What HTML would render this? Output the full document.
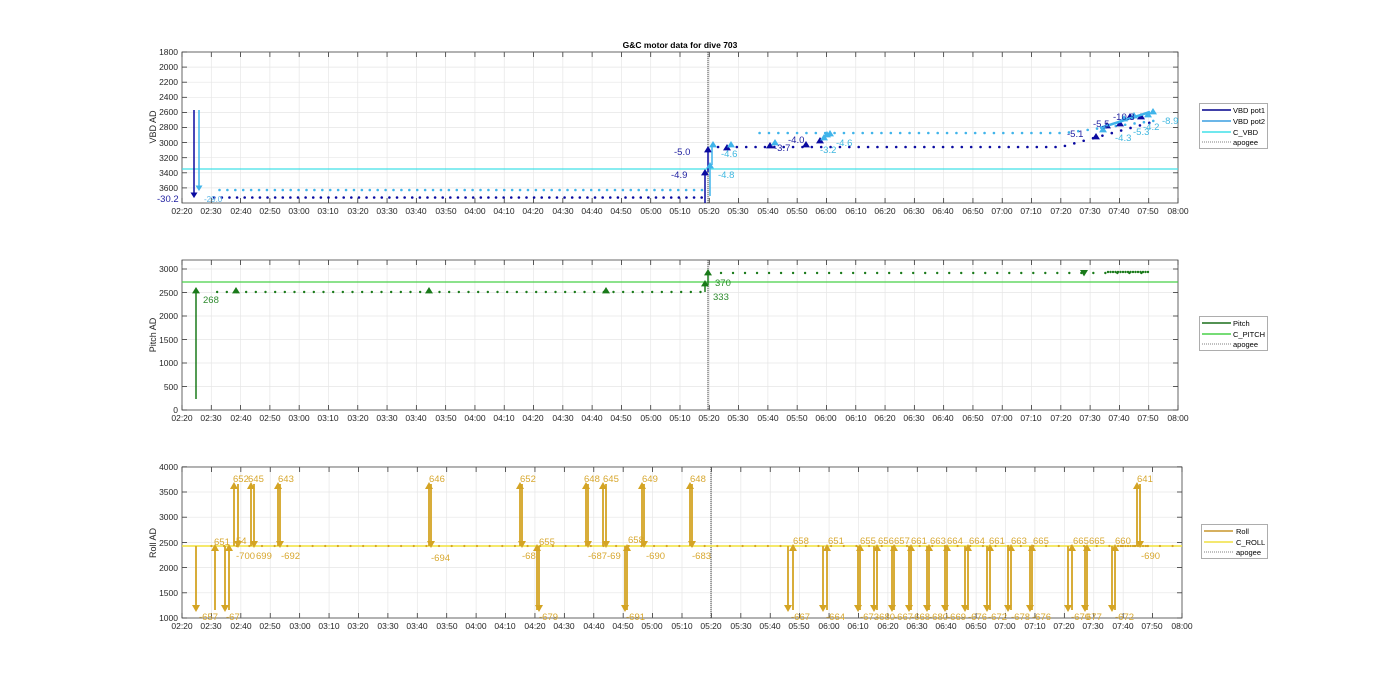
<!DOCTYPE html>
<html><head><meta charset="utf-8"><style>
html,body{margin:0;padding:0;background:#fff;width:1400px;height:693px;overflow:hidden}
svg{display:block;font-family:"Liberation Sans",sans-serif}
.tk{font-size:8.5px;fill:#262626}
.yl{font-size:9px;fill:#262626}
.lg{font-size:7.5px;fill:#000}
</style></head><body>
<svg id="s" width="1400" height="693" viewBox="0 0 1400 693">
<g id="grid"></g>
<g id="data"></g>
<text x="680" y="48" text-anchor="middle" style="font-size:8.5px;font-weight:bold;fill:#000">G&amp;C motor data for dive 703</text>
<!-- Top y labels -->
<g class="tk" text-anchor="end">
<text x="178" y="55">1800</text><text x="178" y="70">2000</text><text x="178" y="85">2200</text><text x="178" y="100">2400</text><text x="178" y="115">2600</text><text x="178" y="130">2800</text><text x="178" y="146">3000</text><text x="178" y="161">3200</text><text x="178" y="176">3400</text><text x="178" y="191">3600</text>
<text x="178" y="272">3000</text><text x="178" y="296">2500</text><text x="178" y="319">2000</text><text x="178" y="343">1500</text><text x="178" y="366">1000</text><text x="178" y="390">500</text><text x="178" y="413">0</text>
<text x="178" y="470">4000</text><text x="178" y="495">3500</text><text x="178" y="520">3000</text><text x="178" y="546">2500</text><text x="178" y="571">2000</text><text x="178" y="596">1500</text><text x="178" y="621">1000</text>
</g>
<text class="yl" transform="translate(156,127) rotate(-90)" text-anchor="middle">VBD AD</text>
<text class="yl" transform="translate(156,335) rotate(-90)" text-anchor="middle">Pitch AD</text>
<text class="yl" transform="translate(156,543) rotate(-90)" text-anchor="middle">Roll AD</text>
<g id="xl1" class="tk" text-anchor="middle" transform="translate(0,214)">
<text x="182">02:20</text><text x="211">02:30</text><text x="241">02:40</text><text x="270">02:50</text><text x="299">03:00</text><text x="328">03:10</text><text x="358">03:20</text><text x="387">03:30</text><text x="416">03:40</text><text x="446">03:50</text><text x="475">04:00</text><text x="504">04:10</text><text x="533">04:20</text><text x="563">04:30</text><text x="592">04:40</text><text x="621">04:50</text><text x="651">05:00</text><text x="680">05:10</text><text x="709">05:20</text><text x="738">05:30</text><text x="768">05:40</text><text x="797">05:50</text><text x="826">06:00</text><text x="856">06:10</text><text x="885">06:20</text><text x="914">06:30</text><text x="943">06:40</text><text x="973">06:50</text><text x="1002">07:00</text><text x="1031">07:10</text><text x="1061">07:20</text><text x="1090">07:30</text><text x="1119">07:40</text><text x="1148">07:50</text><text x="1178">08:00</text>
</g>
<g class="tk" text-anchor="middle" transform="translate(0,421)">
<text x="182">02:20</text><text x="211">02:30</text><text x="241">02:40</text><text x="270">02:50</text><text x="299">03:00</text><text x="328">03:10</text><text x="358">03:20</text><text x="387">03:30</text><text x="416">03:40</text><text x="446">03:50</text><text x="475">04:00</text><text x="504">04:10</text><text x="533">04:20</text><text x="563">04:30</text><text x="592">04:40</text><text x="621">04:50</text><text x="651">05:00</text><text x="680">05:10</text><text x="709">05:20</text><text x="738">05:30</text><text x="768">05:40</text><text x="797">05:50</text><text x="826">06:00</text><text x="856">06:10</text><text x="885">06:20</text><text x="914">06:30</text><text x="943">06:40</text><text x="973">06:50</text><text x="1002">07:00</text><text x="1031">07:10</text><text x="1061">07:20</text><text x="1090">07:30</text><text x="1119">07:40</text><text x="1148">07:50</text><text x="1178">08:00</text>
</g>
<g class="tk" text-anchor="middle" transform="translate(0,629)">
<text x="182">02:20</text><text x="211">02:30</text><text x="241">02:40</text><text x="270">02:50</text><text x="300">03:00</text><text x="329">03:10</text><text x="358">03:20</text><text x="388">03:30</text><text x="417">03:40</text><text x="447">03:50</text><text x="476">04:00</text><text x="505">04:10</text><text x="535">04:20</text><text x="564">04:30</text><text x="594">04:40</text><text x="623">04:50</text><text x="652">05:00</text><text x="682">05:10</text><text x="711">05:20</text><text x="741">05:30</text><text x="770">05:40</text><text x="799">05:50</text><text x="829">06:00</text><text x="858">06:10</text><text x="888">06:20</text><text x="917">06:30</text><text x="946">06:40</text><text x="976">06:50</text><text x="1005">07:00</text><text x="1035">07:10</text><text x="1064">07:20</text><text x="1093">07:30</text><text x="1123">07:40</text><text x="1152">07:50</text><text x="1182">08:00</text>
</g>
<!-- top labels -->
<g style="font-size:9.5px">
<text x="157" y="202" fill="#1e1ea0">-30.2</text>
<text x="204" y="202" fill="#5ab4e6" style="font-size:8px">-29.0</text>
<text x="674" y="155" fill="#1e1ea0">-5.0</text>
<text x="671" y="178" fill="#1e1ea0">-4.9</text>
<text x="718" y="178" fill="#40b8e0">-4.8</text>
<text x="721" y="157" fill="#40b8e0">-4.6</text>
<text x="774" y="151" fill="#1e1ea0">-3.7</text>
<text x="788" y="143" fill="#1e1ea0">-4.0</text>
<text x="820" y="153" fill="#40b8e0">-3.2</text>
<text x="836" y="146" fill="#40b8e0">-4.6</text>
<text x="1067" y="137" fill="#1e1ea0">-5.1</text>
<text x="1093" y="127" fill="#1e1ea0">-5.5</text>
<text x="1113" y="120" fill="#1e1ea0">-10.3</text>
<text x="1115" y="141" fill="#40b8e0">-4.3</text>
<text x="1133" y="135" fill="#40b8e0">-5.3</text>
<text x="1143" y="130" fill="#40b8e0">-4.2</text>
<text x="1162" y="124" fill="#40b8e0">-8.9</text>
</g>
<g style="font-size:9.5px" fill="#2e8b2e">
<text x="203" y="303">268</text><text x="713" y="300">333</text><text x="715" y="286">370</text>
</g>
<g id="rl" style="font-size:9.5px" fill="#d8a830"></g>
<!-- legends -->
<g>
<rect x="1199.5" y="103.5" width="68" height="45" fill="#fff" stroke="#999" stroke-width="0.8"/>
<line x1="1202" y1="110" x2="1231" y2="110" stroke="#00008b" stroke-width="1.6"/><text class="lg" x="1233" y="113">VBD pot1</text>
<line x1="1202" y1="121" x2="1231" y2="121" stroke="#3a9ee0" stroke-width="1.6"/><text class="lg" x="1233" y="124">VBD pot2</text>
<line x1="1202" y1="132" x2="1231" y2="132" stroke="#40e0e8" stroke-width="1.6"/><text class="lg" x="1233" y="135">C_VBD</text>
<line x1="1202" y1="142" x2="1231" y2="142" stroke="#555" stroke-width="0.8" stroke-dasharray="1,1"/><text class="lg" x="1233" y="145">apogee</text>
<rect x="1199.5" y="316.5" width="68" height="34" fill="#fff" stroke="#999" stroke-width="0.8"/>
<line x1="1202" y1="323" x2="1231" y2="323" stroke="#1a6e1a" stroke-width="1.4"/><text class="lg" x="1233" y="326">Pitch</text>
<line x1="1202" y1="334" x2="1231" y2="334" stroke="#48d048" stroke-width="1.6"/><text class="lg" x="1233" y="337">C_PITCH</text>
<line x1="1202" y1="344" x2="1231" y2="344" stroke="#555" stroke-width="0.8" stroke-dasharray="1,1"/><text class="lg" x="1233" y="347">apogee</text>
<rect x="1201.5" y="524.5" width="66" height="34" fill="#fff" stroke="#999" stroke-width="0.8"/>
<line x1="1204" y1="531" x2="1233" y2="531" stroke="#c8952a" stroke-width="1.4"/><text class="lg" x="1236" y="534">Roll</text>
<line x1="1204" y1="542" x2="1233" y2="542" stroke="#f0e040" stroke-width="1.6"/><text class="lg" x="1236" y="545">C_ROLL</text>
<line x1="1204" y1="552" x2="1233" y2="552" stroke="#555" stroke-width="0.8" stroke-dasharray="1,1"/><text class="lg" x="1236" y="555">apogee</text>
</g>
</svg>
<script>
var NS="http://www.w3.org/2000/svg",G=document.getElementById("grid"),D=document.getElementById("data"),RL=document.getElementById("rl");
function el(p,t,a){var e=document.createElementNS(NS,t);for(var k in a)e.setAttribute(k,a[k]);p.appendChild(e);return e;}
function ln(p,x1,y1,x2,y2,c,w,da){var a={x1:x1,y1:y1,x2:x2,y2:y2,stroke:c,"stroke-width":w||1};if(da)a["stroke-dasharray"]=da;return el(p,"line",a);}
function axes(L,R,T,B,yt){
 for(var i=0;i<=34;i++){var x=L+(R-L)*i/34;ln(G,x,T,x,B,"#e6e6e6",0.7);ln(G,x,B,x,B-5,"#333",0.8);ln(G,x,T,x,T+5,"#333",0.8);}
 yt.forEach(function(y){ln(G,L,y,R,y,"#e6e6e6",0.7);ln(G,L,y,L+5,y,"#333",0.8);ln(G,R,y,R-5,y,"#333",0.8);});
 el(G,"rect",{x:L,y:T,width:R-L,height:B-T,fill:"none",stroke:"#444","stroke-width":0.8});
}
var t1=[];for(var i=0;i<10;i++)t1.push(52+i*15.1);axes(182,1178,52,203,t1);
var t2=[];for(var i=0;i<7;i++)t2.push(410-i*23.5);axes(182,1178,260,410,t2);
var t3=[];for(var i=0;i<7;i++)t3.push(618-i*25.2);axes(182,1182,467,618,t3);
function X(t){return 182+t*996/340;}
function dot(x,y,c,r){el(D,"circle",{cx:x,cy:y,r:r||1.3,fill:c});}
function tri(x,y,c,dn,s){s=s||4;var p=dn?[x-s,y-s,x+s,y-s,x,y+s*0.6]:[x-s,y+s*0.6,x+s,y+s*0.6,x,y-s];el(D,"polygon",{points:p.join(","),fill:c});}
// apogee lines
[[708,52,203],[708,260,410],[711,467,618]].forEach(function(a){ln(D,a[0],a[1],a[0],a[2],"#444",1,"1.2,0.8");});
// TOP
ln(D,182,169,1178,169,"#40e0e8",1.3);
var DB="#0a0aa0",LB="#40b4ea";
for(var t=11;t<178;t+=2.6){dot(X(t),197.5,DB);}
for(var t=12;t<178;t+=2.7){dot(X(t+0.8),190,LB);}
ln(D,194,110,194,195,DB,1.5);tri(194,196,DB,true,3.5);
ln(D,199,110,199,188,LB,1.5);tri(199,189,LB,true,3.5);
ln(D,705,203,705,175,DB,1.5);tri(705,173,DB,false);
ln(D,708,172,708,151,DB,1.5);tri(708,150,DB,false);
ln(D,710,196,710,168,LB,1.5);tri(710,166,LB,false);
ln(D,712,165,712,146,LB,1.5);tri(713,145,LB,false);
for(var t=183;t<340;t+=3.2){var x=X(t);if(x>1150)break;var yb=147-(t>300?(t-300)*0.8:0),yl=133-(t>300?(t-300)*0.4:0);dot(x,yb,DB);if(t>195)dot(x+4,yl,LB);}
[[727,148,DB],[731,145,LB],[770,146,DB],[775,143,LB],[806,145,DB],[820,141,DB],[824,138,LB],[827,135,LB],[830,134,LB],[1096,137,DB],[1103,130,LB],[1107,126,DB],[1120,124,DB],[1124,119,LB],[1130,117,DB],[1134,116,LB],[1141,117,DB],[1148,115,LB],[1153,112,LB]].forEach(function(a){tri(a[0],a[1],a[2],false);});
ln(D,1100,128,1150,112,LB,2.5);
// MIDDLE
var GR="#1a7a1a";
ln(D,182,282,1178,282,"#48d048",1.3);
ln(D,196,399,196,292,GR,1.5);tri(196,291,GR,false);
for(var t=12;t<178;t+=3.3)dot(X(t),292,GR,1.2);
[[236,291],[429,291],[606,291]].forEach(function(a){tri(a[0],a[1],GR,false);});
ln(D,705,292,705,285,GR,1.5);tri(705,284,GR,false);ln(D,708,285,708,275,GR,1.5);tri(708,273,GR,false);
for(var t=184;t<340;t+=4.1){var x=X(t);if(x>1150)break;dot(x,273,GR,1.2);}
for(var x=1108;x<1150;x+=2.5)dot(x,272,GR,1.2);
tri(1084,274,GR,true);
// BOTTOM
var GD="#d4a424";
ln(D,182,546,1182,546,"#f2e23a",1.5);
for(var t=10;t<340;t+=4.3)dot(182+t*1000/340,546,GD,1.1);
for(var x=1118;x<1150;x+=2.5)dot(x,546,GD,1.1);
function up(x,y0,y1){ln(D,x,y0,x,y1+4,GD,1.8);el(D,"polygon",{points:[x-4,y1+5,x+4,y1+5,x,y1-2].join(","),fill:GD});}
function dn(x,y0,y1){ln(D,x,y0,x,y1-4,GD,1.8);el(D,"polygon",{points:[x-4,y1-5,x+4,y1-5,x,y1+2].join(","),fill:GD});}
var T=484,M=546,Bt=610;
dn(196,M,Bt);up(215,Bt,M);dn(225,M,Bt);up(229,Bt,M);up(234,M,T);dn(238,T,M);up(251,M,T);dn(254,T,M);up(278,M,T);dn(280,T,M);
up(429,M,T);dn(431,T,M);up(520,M,T);dn(522,T,M);up(537,Bt,M);dn(539,M,Bt);up(586,M,T);dn(588,T,M);up(603,M,T);dn(606,T,M);dn(625,M,Bt);up(627,Bt,M);up(642,M,T);dn(644,T,M);up(690,M,T);dn(692,T,M);
[[788,793],[823,827],[858,860],[874,877],[892,894],[909,911],[927,929],[945,947],[965,968],[987,990],[1008,1011],[1030,1032],[1068,1072],[1085,1087],[1112,1115]].forEach(function(p){dn(p[0],M,Bt);up(p[1],Bt,M);});
up(1137,M,T);dn(1140,T,M);
[["-657",199,620],["651",214,545],["-67",226,620],["54",236,544],["652",233,482],["645",248,482],["-700",236,559],["699",256,559],["643",278,482],["-692",281,559],["646",429,482],["-694",431,561],["652",520,482],["-68",522,559],["655",539,545],["-679",539,620],["648",584,482],["645",603,482],["-687",588,559],["-69",607,559],["-691",626,620],["658",628,543],["649",642,482],["-690",646,559],["648",690,482],["-683",692,559],
["658",793,544],["-667",791,620],["651",828,544],["-664",826,620],["655",860,544],["656",878,544],["657",894,544],["661",911,544],["663",930,544],["664",947,544],["664",969,544],["661",989,544],["663",1011,544],["665",1033,544],["665",1073,544],["665",1089,544],["660",1115,544],["641",1137,482],["-690",1141,559],
["-673",860,620],["-680",876,620],["-667",894,620],["-668",911,620],["-680",929,620],["-669",947,620],["-676",968,620],["-672",988,620],["-678",1011,620],["-676",1032,620],["-670",1071,620],["677",1086,620],["-672",1115,620]].forEach(function(a){var e=el(RL,"text",{x:a[1],y:a[2]});e.textContent=a[0];});
</script>
</body></html>
